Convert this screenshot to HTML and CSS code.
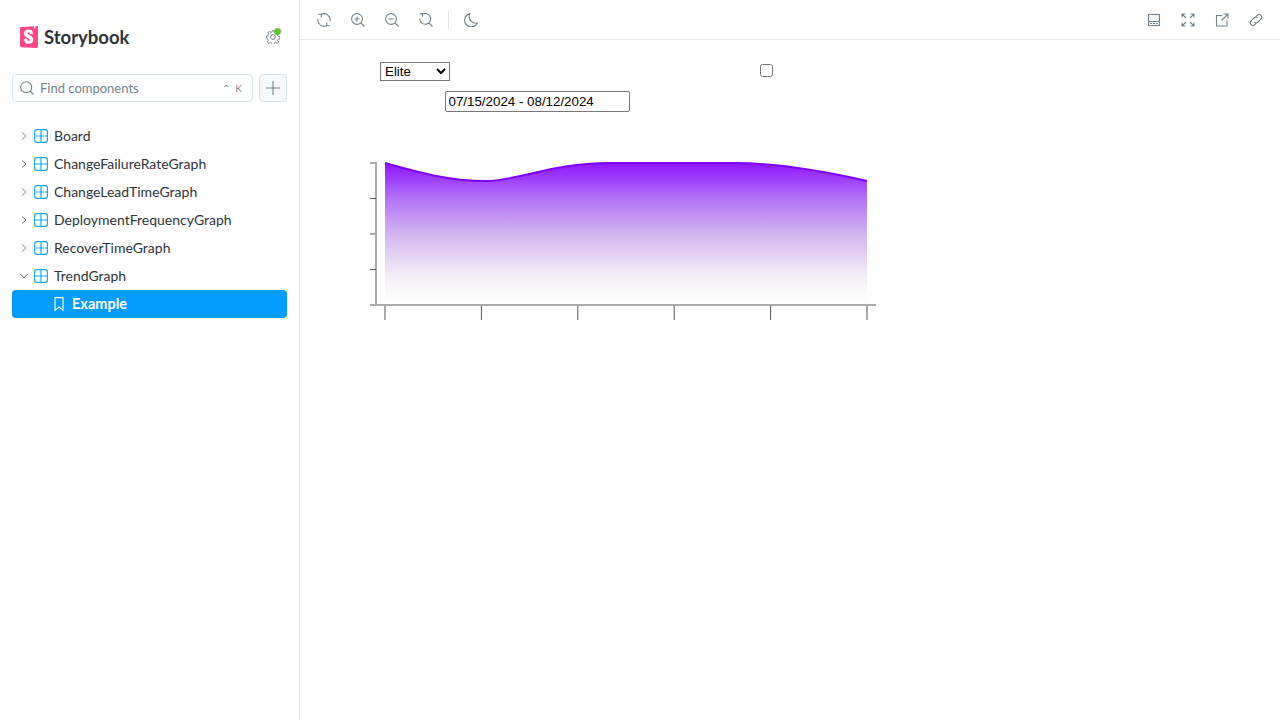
FILE: index.html
```html
<!DOCTYPE html>
<html lang="en">
<head>
<meta charset="utf-8">
<title>Storybook</title>
<link rel="stylesheet" href="styles.css">
</head>
<body>
<div class="app">
  <aside class="sidebar">
    <div class="brand">
      <div class="logo">
        <svg class="logo-mark" width="18" height="22" viewBox="0 0 18 22"><path fill="#ff4785" d="M0 1.2 14 .3l.1 0-.2 2.4 1.3-.1.1-2.4L18 0v20.8c0 .7-.5 1.2-1.2 1.2L1 21.2c-.6 0-1-.5-1-1.1z"/><path fill="#fff" d="M9.6 8.1c0 .4 2.900.2 3.300-.1 0-2.900-1.600-4.400-4.400-4.400-2.900 0-4.500 1.600-4.500 3.900 0 4.100 5.500 4.200 5.500 6.400 0 .6-.3 1-1 1-.8 0-1.200-.4-1.100-2 0-.3-3-.4-3.100 0-.2 3.800 2.100 4.900 4.300 4.900 2.700 0 4.700-1.400 4.700-4 0-4.500-5.600-4.400-5.600-6.600 0-.9.7-1 1-1 .4 0 1 .1.900 1.900z"/></svg>
        <span class="logo-text">Storybook</span>
      </div>
      <div class="gear">
        <svg width="14" height="14" viewBox="0 0 14 14" fill="none" stroke="#73828c" stroke-width="1"><path d="M6 .8h2l.4 1.700 1.300.6 1.500-.9 1.400 1.400-.9 1.500.6 1.300 1.700.4v2l-1.700.4-.6 1.300.9 1.500-1.400 1.400-1.500-.9-1.300.6-.4 1.700H6l-.4-1.700-1.300-.6-1.500.9-1.400-1.400.9-1.500-.6-1.300L.5 8V6l1.700-.4.6-1.300-.9-1.500 1.400-1.400 1.500.9 1.300-.6z"/><circle cx="7" cy="7" r="2.400"/></svg>
        <span class="gear-dot"></span>
      </div>
    </div>
    <div class="search-row">
      <div class="search">
        <svg width="14" height="14" viewBox="0 0 14 14" fill="none" stroke="#73828c" stroke-width="1.100"><circle cx="6.200" cy="6.200" r="5.500"/><path d="M10.200 10.200l3.300 3.300"/></svg>
        <span class="search-label">Find components</span>
        <span class="keys"><span>⌃</span><span>K</span></span>
      </div>
      <button class="add" type="button" aria-label="Create">
        <svg width="14" height="14" viewBox="0 0 14 14" stroke="#73828c" stroke-width="1.100"><path d="M7 0v14M0 7h14"/></svg>
      </button>
    </div>
    <nav class="tree">
      <div class="row"><svg class="chev" width="8" height="8" viewBox="0 0 8 8" fill="none"><path d="M2 .5l4 3.500-4 3.500"/></svg><svg class="comp" width="14" height="14" viewBox="0 0 14 14" fill="none"><rect x=".6" y=".6" width="12.800" height="12.800" rx="2.400"/><path d="M7 .6v12.800M.6 7h12.800"/></svg><span>Board</span></div>
      <div class="row"><svg class="chev" width="8" height="8" viewBox="0 0 8 8" fill="none"><path d="M2 .5l4 3.500-4 3.500"/></svg><svg class="comp" width="14" height="14" viewBox="0 0 14 14" fill="none"><rect x=".6" y=".6" width="12.800" height="12.800" rx="2.400"/><path d="M7 .6v12.800M.6 7h12.800"/></svg><span>ChangeFailureRateGraph</span></div>
      <div class="row"><svg class="chev" width="8" height="8" viewBox="0 0 8 8" fill="none"><path d="M2 .5l4 3.500-4 3.500"/></svg><svg class="comp" width="14" height="14" viewBox="0 0 14 14" fill="none"><rect x=".6" y=".6" width="12.800" height="12.800" rx="2.400"/><path d="M7 .6v12.800M.6 7h12.800"/></svg><span>ChangeLeadTimeGraph</span></div>
      <div class="row"><svg class="chev" width="8" height="8" viewBox="0 0 8 8" fill="none"><path d="M2 .5l4 3.500-4 3.500"/></svg><svg class="comp" width="14" height="14" viewBox="0 0 14 14" fill="none"><rect x=".6" y=".6" width="12.800" height="12.800" rx="2.400"/><path d="M7 .6v12.800M.6 7h12.800"/></svg><span>DeploymentFrequencyGraph</span></div>
      <div class="row"><svg class="chev" width="8" height="8" viewBox="0 0 8 8" fill="none"><path d="M2 .5l4 3.500-4 3.500"/></svg><svg class="comp" width="14" height="14" viewBox="0 0 14 14" fill="none"><rect x=".6" y=".6" width="12.800" height="12.800" rx="2.400"/><path d="M7 .6v12.800M.6 7h12.800"/></svg><span>RecoverTimeGraph</span></div>
      <div class="row"><svg class="chev" width="8" height="8" viewBox="0 0 8 8" fill="none"><path d="M.5 2l3.500 4 3.500-4"/></svg><svg class="comp" width="14" height="14" viewBox="0 0 14 14" fill="none"><rect x=".6" y=".6" width="12.800" height="12.800" rx="2.400"/><path d="M7 .6v12.800M.6 7h12.800"/></svg><span>TrendGraph</span></div>
      <div class="row story"><svg width="10" height="14" viewBox="0 0 10 14" fill="none" stroke="#fff" stroke-width="1.100"><path d="M1 .6h8v12.600l-4-3.200-4 3.200z"/></svg><span>Example</span></div>
    </nav>
  </aside>
  <main class="main">
    <header class="toolbar">
      <div class="tools">
        <svg class="tool" width="14" height="14" viewBox="0 0 14 14" fill="none"><path d="M3.600 1.900A6 6 0 0 1 12.900 8.300M10.400 12.100A6 6 0 0 1 1.100 5.700"/><path d="M1 1.300h3.300v3.200M13 12.700H9.700V9.500"/></svg>
        <svg class="tool" width="14" height="14" viewBox="0 0 14 14" fill="none"><circle cx="6" cy="6" r="5.400"/><path d="M10 10l3.500 3.500M6 3.500v5M3.500 6h5"/></svg>
        <svg class="tool" width="14" height="14" viewBox="0 0 14 14" fill="none"><circle cx="6" cy="6" r="5.400"/><path d="M10 10l3.500 3.500M3.500 6h5"/></svg>
        <svg class="tool" width="14" height="14" viewBox="0 0 14 14" fill="none"><path d="M2.500 1.900A5.400 5.400 0 1 1 .8 5.500M10 10l3.500 3.500M.8 .8h2.800v2.800"/></svg>
        <span class="divider"></span>
        <svg class="tool" width="14" height="14" viewBox="0 0 14 14" fill="none"><path d="M5.800.6A6.700 6.700 0 0 0 13.400 10 6.700 6.700 0 1 1 5.800.6z"/></svg>
      </div>
      <div class="tools tools-right">
        <svg class="tool" width="14" height="14" viewBox="0 0 14 14" fill="none"><rect x="1.500" y="1.500" width="11" height="11"/><path d="M1.500 8.500h11"/><path d="M3 10.500h8" stroke-dasharray="2 1"/></svg>
        <svg class="tool" width="14" height="14" viewBox="0 0 14 14" fill="none"><path d="M1 4.500V1h3.500M9.500 1H13v3.500M13 9.500V13H9.500M4.500 13H1V9.500M1 1l4 4M13 1L9 5M13 13L9 9M1 13l4-4"/></svg>
        <svg class="tool" width="14" height="14" viewBox="0 0 14 14" fill="none"><path d="M7 2.500H1.500V13H12V7.500M8.500 1H13v4.500M13 1L6.500 7.500"/></svg>
        <svg class="tool" width="14" height="14" viewBox="0 0 14 14" fill="none"><path d="M5.200 5.300l2.900-3a2.700 2.700 0 0 1 3.800 0 2.700 2.700 0 0 1 0 3.800l-3 3a2.700 2.700 0 0 1-3.800 0M8.800 8.700l-2.900 3a2.700 2.700 0 0 1-3.800 0 2.700 2.700 0 0 1 0-3.800l3-3a2.700 2.700 0 0 1 3.800 0"/></svg>
      </div>
    </header>
    <section class="preview">
      <div class="controls">
        <div class="controls-top">
          <select class="level"><option>Elite</option><option>High</option><option>Medium</option><option>Low</option></select>
          <input class="check" type="checkbox">
        </div>
        <input class="dates" type="text" value="07/15/2024 - 08/12/2024">
      </div>
      <svg class="chart" width="520" height="180" viewBox="360 150 520 180">
        <defs>
          <linearGradient id="fade" gradientUnits="userSpaceOnUse" x1="0" y1="163" x2="0" y2="305">
            <stop offset="0" stop-color="#8f14ff"/>
            <stop offset="0.25" stop-color="#b272f7"/>
            <stop offset="0.5" stop-color="#d3b4f0"/>
            <stop offset="0.75" stop-color="#eee6f6"/>
            <stop offset="0.9" stop-color="#fafafa"/>
            <stop offset="0.96" stop-color="#fefefe"/>
            <stop offset="1" stop-color="#ffffff"/>
          </linearGradient>
        </defs>
        <path fill="url(#fade)" d="M385 163C420 173 450 181 485 181C520 181 550 163 610 163L735 163C780 163 830 172.500 867 181V305H385Z"/>
        <path fill="none" stroke="#8000ff" stroke-width="2" d="M385 163C420 173 450 181 485 181C520 181 550 163 610 163L735 163C780 163 830 172.500 867 181"/>
        <g class="axis">
          <path class="axis-soft" d="M370 163H377M376 163V305M370 234H376M370 305H876M385 305V320M867 305V320"/>
          <path class="axis-thin" d="M370 198.500H376M370 269.500H376M481.400 306V320M577.800 306V320M674.200 306V320M770.600 306V320"/>
        </g>
      </svg>
    </section>
  </main>
</div>
</body>
</html>
```

FILE: styles.css
```css
* { box-sizing: border-box; }
html, body { margin: 0; height: 100%; }
body { font-family: Lato, "Noto Sans", sans-serif; background: #fff; color: #2e3438; overflow: hidden; }
.app { display: flex; height: 720px; }

.sidebar { width: 300px; flex: none; border-right: 1px solid #e3e5e8; padding: 0 12px 0 12px; }
.brand { display: flex; align-items: center; justify-content: space-between; height: 74px; padding: 0 6px 0 8px; }
.logo { display: flex; align-items: center; gap: 6px; }
.logo-mark { display: block; }
.logo-text { font-family: Lato, sans-serif; font-weight: 700; font-size: 18.5px; color: #2e3438; }
.gear { position: relative; width: 16px; height: 16px; display: flex; align-items: center; justify-content: center; }
.gear-dot { position: absolute; top: -1px; right: 0; width: 7px; height: 7px; border-radius: 50%; background: #66bf3c; }

.search-row { display: flex; gap: 6px; }
.search { flex: 1; height: 28px; border: 1px solid #d3e3f0; border-radius: 4px; display: flex; align-items: center; padding: 0 10px 0 7px; gap: 6px; }
.search-label { flex: 1; font-size: 13px; color: #73828c; padding-bottom: 1px; }
.keys { display: flex; gap: 5px; font-size: 10px; color: #73828c; }
.add { width: 28px; height: 28px; padding: 0; border: 1px solid #d3e3f0; border-radius: 4px; background: #f5f8fb; display: flex; align-items: center; justify-content: center; }

.tree { margin-top: 20px; display: flex; flex-direction: column; }
.row { height: 28px; display: flex; align-items: center; font-size: 14px; padding-left: 8px; }
.row > span { margin-left: 6px; padding-bottom: 2px; }
.chev { stroke: #73828c; stroke-width: 1; margin-right: 6px; }
.comp { stroke: #1ea7fd; stroke-width: 1.200; }
.story { background: #029cfd; border-radius: 4px; color: #fff; font-weight: 700; padding-left: 42px; }
.story > span { margin-left: 8px; font-size: 14.500px; }

.main { flex: 1; min-width: 0; display: flex; flex-direction: column; }
.toolbar { height: 40px; flex: none; border-bottom: 1px solid #e3e5e8; display: flex; align-items: center; justify-content: space-between; padding: 0 17px; }
.tools { display: flex; align-items: center; gap: 20px; }
.tool { stroke: #73828c; stroke-width: 1.100; display: block; }
.divider { width: 1px; height: 20px; background: #e3e5e8; margin: 0 -5px 0 -5px; }

.preview { padding: 22px 0 0 80px; }
.controls { width: 400px; }
.controls-top { display: flex; justify-content: space-between; align-items: flex-start; }
.level { width: 70px; height: 19px; font-family: "Liberation Sans", Arial, sans-serif; font-size: 13.333px; background: #fff; color: #000; }
.check { margin: 2px 7px 0 0; width: 13px; height: 13px; }
.dates { display: block; width: 185px; height: 21px; margin: 10px 0 0 65px; padding: 1px 2.500px; font-family: "Liberation Sans", Arial, sans-serif; font-size: 13.333px; color: #000; border: 1px solid #767676; border-radius: 2px; }

.chart { display: block; margin: 38px 0 0 -20px; }
.axis path { fill: none; }
.axis-soft { stroke: #aaa; stroke-width: 2; }
.axis-thin { stroke: #555; stroke-width: 1; }
```
